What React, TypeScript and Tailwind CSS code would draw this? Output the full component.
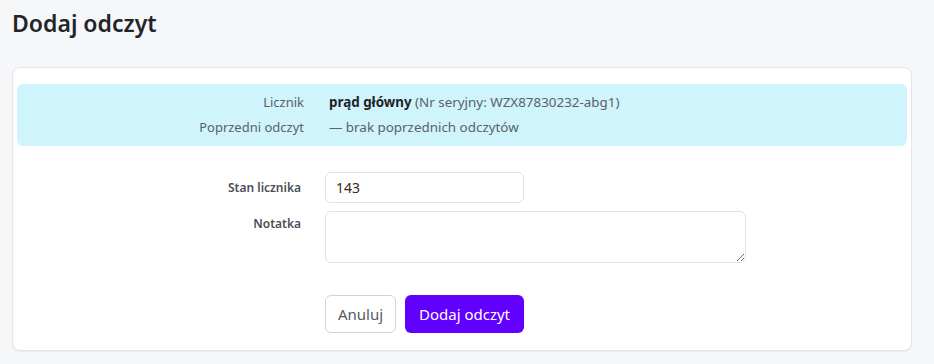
import { useState } from 'react'

// ---------------------------------------------------------------------------
// Info row inside the alert box
// ---------------------------------------------------------------------------

function InfoRow({ label, children }: { label: string; children: React.ReactNode }) {
  return (
    <div className="flex items-center h-[25px]">
      <div className="w-[287px] text-right text-[13px] text-[#5a6169]">{label}</div>
      <div className="ml-[25px] text-[13.4px] text-[#5a6169]">{children}</div>
    </div>
  )
}

export default function App() {
  const [value, setValue] = useState('143')
  const [note, setNote] = useState('')

  return (
    <div
      className="min-h-[364px] bg-[#f6f7f9] px-3 pt-[6px]"
      style={{ fontFamily: '"Noto Sans", "Open Sans", sans-serif' }}
    >
      <h1 className="text-[23px] font-semibold text-[#212529] leading-[34px]">Dodaj odczyt</h1>

      <div className="mt-[27px] w-[900px] rounded-lg border border-[#e3e5e9] bg-white shadow-[0_1px_2px_rgba(0,0,0,0.06)] px-[4px] pt-[16px] pb-[17px]">
        {/* Info */}
        <div className="rounded-md bg-[#cff4fc] py-[6px]">
          <InfoRow label="Licznik">
            <span className="font-bold text-[#1f2328]">prąd główny</span> (Nr seryjny: WZX87830232-abg1)
          </InfoRow>
          <InfoRow label="Poprzedni odczyt">— brak poprzednich odczytów</InfoRow>
        </div>

        {/* Form */}
        <div className="mt-[26px] flex flex-col gap-[8px]">
          <div className="flex items-center">
            <label className="w-[284px] text-right text-[12px] font-semibold text-[#4a4f55]">Stan licznika</label>
            <input
              value={value}
              onChange={(e) => setValue(e.target.value)}
              className="ml-[24px] h-[31px] w-[199px] rounded-md border border-[#dee2e6] px-[10px] text-[14px] text-[#3b2a14] outline-none"
            />
          </div>
          <div className="flex items-start">
            <label className="w-[284px] pt-[4px] text-right text-[12px] font-semibold text-[#4a4f55]">Notatka</label>
            <textarea
              value={note}
              onChange={(e) => setNote(e.target.value)}
              className="ml-[24px] h-[52px] w-[421px] rounded-md border border-[#dee2e6] px-[10px] py-[4px] text-[14px] outline-none"
            />
          </div>
        </div>

        <div className="mt-[32px] ml-[308px] flex gap-[9px]">
          <button type="button" className="h-[38px] w-[71px] rounded-md border border-[#d0d4da] bg-white text-[15px] text-[#555b62]">
            Anuluj
          </button>
          <button type="button" className="h-[38px] w-[119px] rounded-md bg-[#6200ff] text-[15px] text-white">
            Dodaj odczyt
          </button>
        </div>
      </div>
    </div>
  )
}
